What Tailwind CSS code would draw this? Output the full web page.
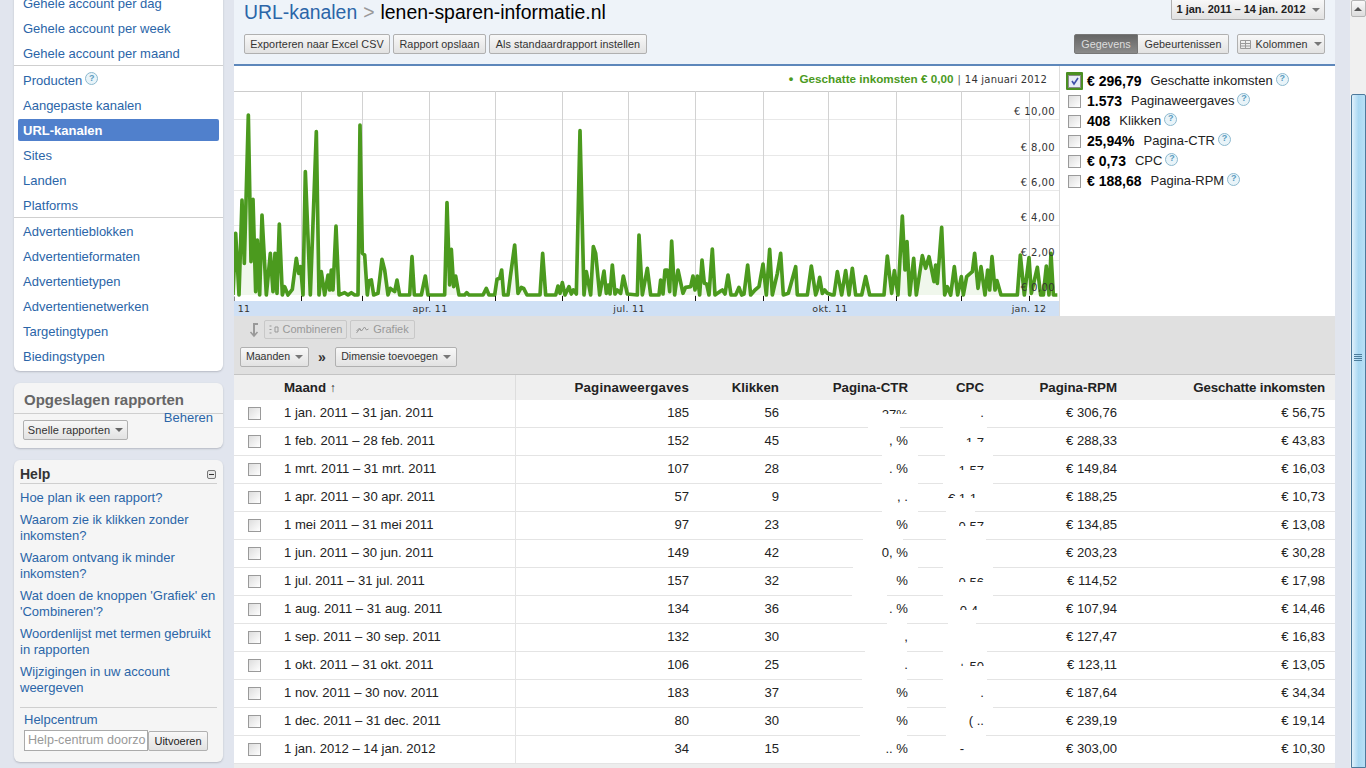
<!DOCTYPE html>
<html lang="nl">

<head>
  <meta charset="UTF-8" />
  <script src="https://cdn.jsdelivr.net/npm/@tailwindcss/browser@4"></script>
  <title>URL-kanalen</title>
</head>

<body class="bg-[#e1e5ee] font-['Liberation_Sans',Arial,sans-serif] text-black h-screen overflow-hidden flex">
  <!-- Sidebar -->
  <aside class="w-[234px] shrink-0 pl-[14px] pr-[11px] flex flex-col text-[13px] text-[#2b65a8]">
    <nav class="bg-white rounded-b-md shadow-[0_1px_2px_#b5b9c2] -mt-[10px] h-[381px] shrink-0">
      <ul class="border-b border-[#cfcfcf] h-[76px] pt-px">
        <li class="h-[25px] flex items-center px-[9px]">Gehele account per dag</li>
        <li class="h-[25px] flex items-center px-[9px]">Gehele account per week</li>
        <li class="h-[25px] flex items-center px-[9px]">Gehele account per maand</li>
      </ul>
      <ul class="border-b border-[#cfcfcf] pt-[2px] h-[152px]">
        <li class="h-[25px] flex items-center px-[9px]">Producten
          <span class="ml-[3px] -mt-1 w-[13px] h-[13px] rounded-full border border-[#8db9cf] bg-[#e9f4f9] text-[#5c9cc0] text-[9px] font-bold flex items-center justify-center">?</span>
        </li>
        <li class="h-[25px] flex items-center px-[9px]">Aangepaste kanalen</li>
        <li class="h-[25px] flex items-center px-[4px] pb-[2px]">
          <span class="w-[201px] h-[22px] bg-[#5080cc] rounded-[2px] text-white font-bold px-[5px] pt-[2px] flex items-center">URL-kanalen</span>
        </li>
        <li class="h-[25px] flex items-center px-[9px]">Sites</li>
        <li class="h-[25px] flex items-center px-[9px]">Landen</li>
        <li class="h-[25px] flex items-center px-[9px]">Platforms</li>
      </ul>
      <ul class="pt-px">
        <li class="h-[25px] flex items-center px-[9px]">Advertentieblokken</li>
        <li class="h-[25px] flex items-center px-[9px]">Advertentieformaten</li>
        <li class="h-[25px] flex items-center px-[9px]">Advertentietypen</li>
        <li class="h-[25px] flex items-center px-[9px]">Advertentienetwerken</li>
        <li class="h-[25px] flex items-center px-[9px]">Targetingtypen</li>
        <li class="h-[25px] flex items-center px-[9px]">Biedingstypen</li>
      </ul>
    </nav>

    <section class="mt-3 h-[65px] shrink-0 bg-[#f5f5f5] rounded-md shadow-[0_1px_2px_#b5b9c2]">
      <h2 class="h-[31px] border-b border-[#cfcfcf] px-[10px] pt-[4px] flex items-center text-[15px] font-bold text-[#666]">Opgeslagen rapporten</h2>
      <div class="flex justify-between pl-[9px] pr-[10px]">
        <button class="mt-[6px] h-[20px] w-[105px] rounded-[2px] border border-[#b0b0b0] bg-linear-to-b from-[#f8f8f8] to-[#e2e2e2] text-[11px] tracking-[0.1px] text-[#333] flex items-center justify-center gap-[5px]">Snelle rapporten <i class="border-x-[4px] border-t-[4px] border-x-transparent border-t-[#666]"></i></button>
        <a class="text-[#2b65a8] text-[13px] leading-none mt-[-3px]">Beheren</a>
      </div>
    </section>

    <section class="mt-3 h-[302px] shrink-0 bg-[#f5f5f5] rounded-md shadow-[0_1px_2px_#b5b9c2] px-[6px]">
      <div class="h-[21px] mt-[3px] border-b border-[#cfcfcf] flex items-center justify-between pt-[3px] text-[14px] font-bold text-[#333]">
        Help
        <span class="w-[9px] h-[9px] mr-[1px] rounded-[2px] border border-[#777] bg-[#e8e8e8] flex items-center justify-center"><i class="block w-[5px] h-px bg-[#333]"></i></span>
      </div>
      <ul class="text-[13px] leading-4 mt-[6px] flex flex-col gap-[6px] h-[217px]">
        <li>Hoe plan ik een rapport?</li>
        <li>Waarom zie ik klikken zonder inkomsten?</li>
        <li>Waarom ontvang ik minder inkomsten?</li>
        <li>Wat doen de knoppen 'Grafiek' en 'Combineren'?</li>
        <li>Woordenlijst met termen gebruikt in rapporten</li>
        <li>Wijzigingen in uw account weergeven</li>
      </ul>
      <div class="border-t border-[#cfcfcf] pl-1 pt-[4px]">
        <div class="text-[13px] leading-[15px]">Helpcentrum</div>
        <div class="flex items-end mt-[3px]">
          <div class="w-[124px] h-[21px] border border-[#aaa] bg-white text-[#999] text-[12.6px] leading-[19px] px-[3px] overflow-hidden whitespace-nowrap">Help-centrum doorzo</div>
          <button class="w-[60px] h-[20px] rounded-[2px] border border-[#b0b0b0] bg-linear-to-b from-[#f8f8f8] to-[#e2e2e2] text-[11px] text-[#222]">Uitvoeren</button>
        </div>
      </div>
    </section>
  </aside>

  <!-- Main column -->
  <main class="w-[1101px] shrink-0 flex flex-col">
    <header class="h-[66px] shrink-0 bg-[#eef3f9] border-b-2 border-[#5d87bb] px-[10px] flex flex-col">
      <div class="flex items-start justify-between h-[34px]">
        <h1 class="text-[19.4px] leading-[24px] flex"><span class="text-[#2b65a8]">URL-kanalen</span><span class="text-[#999] mx-[6px]">&gt;</span><span>lenen-sparen-informatie.nl</span></h1>
        <button class="w-[154px] h-[20px] rounded-b-[2px] border border-t-0 border-[#b0b0b0] bg-linear-to-b from-[#f8f8f8] to-[#e2e2e2] text-[11px] font-bold text-[#222] flex items-center justify-center gap-[6px]">1 jan. 2011 – 14 jan. 2012 <i class="border-x-[4px] border-t-[4px] border-x-transparent border-t-[#777]"></i></button>
      </div>
      <div class="flex items-center text-[10.8px] tracking-[0.05px] text-[#333]">
        <button class="h-[20px] w-[146px] rounded-[2px] border border-[#b0b0b0] bg-linear-to-b from-[#f8f8f8] to-[#e2e2e2]">Exporteren naar Excel CSV</button>
        <button class="ml-[3px] h-[20px] w-[93px] rounded-[2px] border border-[#b0b0b0] bg-linear-to-b from-[#f8f8f8] to-[#e2e2e2]">Rapport opslaan</button>
        <button class="ml-[3px] h-[20px] w-[158px] rounded-[2px] border border-[#b0b0b0] bg-linear-to-b from-[#f8f8f8] to-[#e2e2e2]">Als standaardrapport instellen</button>
        <button class="ml-auto h-[20px] w-[64px] rounded-l-[2px] border border-[#777] bg-linear-to-b from-[#666] to-[#8a8a8a] text-[#ddd]">Gegevens</button>
        <button class="h-[20px] w-[91px] rounded-r-[2px] border border-l-0 border-[#b0b0b0] bg-linear-to-b from-[#f8f8f8] to-[#e2e2e2]">Gebeurtenissen</button>
        <button class="ml-2 h-[20px] w-[88px] rounded-[2px] border border-[#b0b0b0] bg-linear-to-b from-[#f8f8f8] to-[#e2e2e2] flex items-center justify-center gap-[4px]">
          <svg width="11" height="9" viewBox="0 0 11 9" fill="none" stroke="#999"><path d="M.5.5h10v8H.5zM.5 3.500h10M.5 6h10M5.500.5v8" /></svg>
          Kolommen <i class="ml-[2px] border-x-[4px] border-t-[4px] border-x-transparent border-t-[#777]"></i>
        </button>
      </div>
    </header>

    <!-- Chart and metrics -->
    <section class="h-[250px] shrink-0 bg-white flex">
      <div class="w-[826px] shrink-0 border-r border-[#ddd]">
        <div class="h-[25px] flex items-center justify-end pr-[12px] pt-[1px] text-[10px] font-['DejaVu_Sans',sans-serif] text-[#333]">
          <span class="font-['Liberation_Sans',sans-serif] text-[11.7px] font-bold text-[#4b9a1e]"><span class="text-[13px] mr-[3px]">•</span> Geschatte inkomsten € 0,00</span>
          <span class="mx-[4px] text-[#555]">|</span>
          <span class="tracking-[0.2px]">14 januari 2012</span>
        </div>
        <svg class="block font-['DejaVu_Sans',sans-serif]" width="825" height="225" viewBox="235 91 825 225">
          <rect x="235" y="91" width="825" height="210" fill="#fff" />
          <path d="M235 91.500H1060" stroke="#ccc" />
          <path d="M235 119.500H1060M235 155.500H1060M235 190.500H1060M235 225.500H1060M235 260.500H1060" stroke="#e8e8e8" />
          <path d="M302.500 91V296M363.500 91V296M430.500 91V296M496.500 91V296M563.500 91V296M629.500 91V296M696.500 91V296M764.500 91V296M829.500 91V296M897.500 91V296M962.500 91V296M1030.500 91V296" stroke="#d2d2d2" />
          <g transform="translate(234 90) scale(.33333)" fill="#f0f7ec" stroke="#4b9a1e" stroke-width="11" stroke-linejoin="round">
            <polyline points="0,615 8,430 18,615 27,330 34,520 46,75 54,515 60,328 68,605 73,450 80,615 87,375 100,615 112,490 120,605 126,490 132,610 139,402 148,615 155,590 165,615 178,598 190,505 197,550 203,530 210,615 217,245 232,615 240,400 250,125 258,615 265,545 275,615 285,555 290,600 295,540 300,600 309,408 318,615 335,608 345,615 355,608 365,615 375,615 381,105 388,490 395,495 403,615 408,572 415,570 422,615 435,610 447,508 455,540 465,615 472,595 485,605 492,570 500,615 530,615 537,500 544,615 565,615 577,558 585,615 635,615 642,338 650,585 655,478 662,590 668,558 678,615 695,615 701,608 708,615 750,615 760,595 768,615 785,615 792,568 800,565 806,540 812,615 825,615 832,560 845,465 855,610 865,592 872,595 882,615 888,615" />
          </g>
          <g transform="translate(530 90) scale(.33333)" fill="#f0f7ec" stroke="#4b9a1e" stroke-width="11" stroke-linejoin="round">
            <polyline points="0,615 33,615 41,490 50,615 80,615 87,588 93,610 100,578 108,615 120,590 127,612 133,600 142,612 153,122 165,615 172,545 185,615 193,470 200,490 212,615 225,543 232,610 238,585 243,612 250,525 258,612 265,600 275,610 283,558 295,612 325,615 330,435 340,615 355,535 365,615 390,615 395,570 402,612 408,540 415,540 422,605 428,453 437,615 447,540 462,610 470,592 485,590 492,558 498,600 505,558 512,615 519,510 526,580 533,582 540,615 550,477 558,615 572,605 580,600 588,612 597,555 606,615 620,615 630,592 638,615 645,612 656,525 665,615 678,600 690,590 702,522 712,615 722,478 730,615 745,550 755,490 763,615 778,610 785,585 800,530 805,615 810,615" />
          </g>
          <g transform="translate(800 90) scale(.33333)" fill="#f0f7ec" stroke="#4b9a1e" stroke-width="11" stroke-linejoin="round">
            <polyline points="0,615 25,615 37,528 50,615 55,600 62,562 70,610 77,600 85,610 100,615 105,615 115,545 128,615 140,542 150,615 160,535 170,615 188,615 200,560 212,615 255,615 265,498 278,610 286,542 297,615 310,378 318,540 324,455 332,615 344,505 352,615 370,497 380,535 390,500 405,575 410,525 415,580 428,412 437,615 445,590 455,615 466,530 476,615 487,560 493,615 503,560 520,545 527,490 537,595 546,530 558,615 566,540 572,600 579,500 588,600 594,572 606,615 655,615 664,495 676,615 690,503 697,610 715,532 725,615 733,615 742,528 750,615 756,490 763,615 775,615" />
          </g>
          <rect x="235" y="301" width="825" height="15" fill="#cfe0f5" />
          <path d="M235 296.500V301M302.500 296V301M363.500 296V301M430.500 296V301M496.500 296V301M563.500 296V301M629.500 296V301M696.500 296V301M764.500 296V301M829.500 296V301M897.500 296V301M962.500 296V301M1030.500 296V301" stroke="#111" />
          <g font-size="10" fill="#333" text-anchor="end" letter-spacing=".4">
            <text x="1056" y="115">€ 10,00</text>
            <text x="1056" y="151">€ 8,00</text>
            <text x="1056" y="186">€ 6,00</text>
            <text x="1056" y="221">€ 4,00</text>
            <text x="1056" y="256">€ 2,00</text>
            <text x="1056" y="291">€ 0,00</text>
          </g>
          <g font-size="9.500" fill="#333" text-anchor="middle" letter-spacing=".3">
            <text x="245" y="312">11</text>
            <text x="431" y="312">apr. 11</text>
            <text x="630" y="312">jul. 11</text>
            <text x="831" y="312">okt. 11</text>
            <text x="1030" y="312">jan. 12</text>
          </g>
        </svg>
      </div>
      <ul class="flex-1 pl-[7px] pt-[5px] text-[13px] text-[#222]">
        <li class="h-[20px] flex items-center">
          <span class="w-[17px] h-[18px] -ml-px bg-[#4b8f22] rounded-[1px] flex items-center justify-center"><span class="w-[13px] h-[13px] border border-[#8a8a8a] bg-[#e8ecf6] flex items-center justify-center"><svg width="10" height="10" viewBox="0 0 10 10" fill="none" stroke="#3f4ea8" stroke-width="1.600"><path d="M2 5l2 3 4-6" /></svg></span></span>
          <b class="ml-[4px] text-[14px] text-black">€ 296,79</b><span class="ml-[9px]">Geschatte inkomsten</span>
          <span class="ml-[3px] -mt-1 w-[13px] h-[13px] rounded-full border border-[#8db9cf] bg-[#e9f4f9] text-[#5c9cc0] text-[9px] font-bold flex items-center justify-center">?</span>
        </li>
        <li class="h-[20px] flex items-center">
          <span class="w-[13px] h-[13px] ml-px border border-[#9a9a9a] bg-linear-to-br from-[#ddd] to-white"></span>
          <b class="ml-[6px] text-[14px] text-black">1.573</b><span class="ml-[9px]">Paginaweergaves</span>
          <span class="ml-[3px] -mt-1 w-[13px] h-[13px] rounded-full border border-[#8db9cf] bg-[#e9f4f9] text-[#5c9cc0] text-[9px] font-bold flex items-center justify-center">?</span>
        </li>
        <li class="h-[20px] flex items-center">
          <span class="w-[13px] h-[13px] ml-px border border-[#9a9a9a] bg-linear-to-br from-[#ddd] to-white"></span>
          <b class="ml-[6px] text-[14px] text-black">408</b><span class="ml-[9px]">Klikken</span>
          <span class="ml-[3px] -mt-1 w-[13px] h-[13px] rounded-full border border-[#8db9cf] bg-[#e9f4f9] text-[#5c9cc0] text-[9px] font-bold flex items-center justify-center">?</span>
        </li>
        <li class="h-[20px] flex items-center">
          <span class="w-[13px] h-[13px] ml-px border border-[#9a9a9a] bg-linear-to-br from-[#ddd] to-white"></span>
          <b class="ml-[6px] text-[14px] text-black">25,94%</b><span class="ml-[9px]">Pagina-CTR</span>
          <span class="ml-[3px] -mt-1 w-[13px] h-[13px] rounded-full border border-[#8db9cf] bg-[#e9f4f9] text-[#5c9cc0] text-[9px] font-bold flex items-center justify-center">?</span>
        </li>
        <li class="h-[20px] flex items-center">
          <span class="w-[13px] h-[13px] ml-px border border-[#9a9a9a] bg-linear-to-br from-[#ddd] to-white"></span>
          <b class="ml-[6px] text-[14px] text-black">€ 0,73</b><span class="ml-[9px]">CPC</span>
          <span class="ml-[3px] -mt-1 w-[13px] h-[13px] rounded-full border border-[#8db9cf] bg-[#e9f4f9] text-[#5c9cc0] text-[9px] font-bold flex items-center justify-center">?</span>
        </li>
        <li class="h-[20px] flex items-center">
          <span class="w-[13px] h-[13px] ml-px border border-[#9a9a9a] bg-linear-to-br from-[#ddd] to-white"></span>
          <b class="ml-[6px] text-[14px] text-black">€ 188,68</b><span class="ml-[9px]">Pagina-RPM</span>
          <span class="ml-[3px] -mt-1 w-[13px] h-[13px] rounded-full border border-[#8db9cf] bg-[#e9f4f9] text-[#5c9cc0] text-[9px] font-bold flex items-center justify-center">?</span>
        </li>
      </ul>
    </section>

    <!-- Toolbar -->
    <section class="h-[59px] shrink-0 bg-[#e0e0e0] border-b border-[#c4c4c4] text-[10.6px]">
      <div class="flex items-center h-[27px] pl-[14px]">
        <svg width="12" height="16" viewBox="0 0 12 16" fill="none" stroke="#999" stroke-width="2"><path d="M10 2H6v11" /><path d="M2.500 10L6 14l3.500-4" stroke-width="1.500" /></svg>
        <button class="ml-[4px] h-[19px] w-[83px] rounded-[2px] border border-[#c8c8c8] text-[11px] text-[#999] flex items-center justify-center gap-[4px]">
          <svg width="10" height="9" viewBox="0 0 10 9" fill="none" stroke="#999"><path d="M.5 1h2M.5 4.500h2M.5 8h2M6 2h3v5H6z" /></svg>
          Combineren
        </button>
        <button class="ml-[3px] h-[19px] w-[65px] rounded-[2px] border border-[#c8c8c8] text-[11px] text-[#999] flex items-center justify-center gap-[4px]">
          <svg width="13" height="8" viewBox="0 0 13 8" fill="none" stroke="#999"><path d="M.5 7l3-4 2 2 3-4 2 3 2-1M.5 5l3-3 2 3" /></svg>
          Grafiek
        </button>
      </div>
      <div class="flex items-center h-[20px] pl-[6px] mt-[4px] text-[#333]">
        <button class="h-[20px] w-[69px] rounded-[2px] border border-[#b0b0b0] bg-linear-to-b from-[#f8f8f8] to-[#e2e2e2] flex items-center justify-center gap-[5px]">Maanden <i class="border-x-[4px] border-t-[4px] border-x-transparent border-t-[#777]"></i></button>
        <span class="w-[26px] text-center text-[14px] leading-none font-bold">»</span>
        <button class="h-[20px] w-[122px] rounded-[2px] border border-[#b0b0b0] bg-linear-to-b from-[#f8f8f8] to-[#e2e2e2] flex items-center justify-center gap-[5px]">Dimensie toevoegen <i class="border-x-[4px] border-t-[4px] border-x-transparent border-t-[#777]"></i></button>
      </div>
    </section>

    <!-- Report table -->
    <table class="w-[1101px] table-fixed border-separate border-spacing-0 bg-white text-[13.1px] text-[#222] shrink-0">
      <colgroup>
        <col class="w-[50px]" /><col class="w-[232px]" /><col class="w-[183px]" /><col class="w-[90px]" /><col class="w-[129px]" /><col class="w-[76px]" /><col class="w-[133px]" /><col class="w-[208px]" />
      </colgroup>
      <thead class="bg-[#efefef] text-[13.3px] font-bold text-right">
        <tr class="h-[25px]">
          <th></th>
          <th class="text-left border-r border-[#ddd]">Maand <span class="text-[12px]">↑</span></th>
          <th class="pr-[10px] tracking-[0.2px]">Paginaweergaves</th>
          <th class="pr-[10px]">Klikken</th>
          <th class="pr-[10px]">Pagina-CTR</th>
          <th class="pr-[10px]">CPC</th>
          <th class="pr-[10px]">Pagina-RPM</th>
          <th class="pr-[10px] tracking-[-0.15px]">Geschatte inkomsten</th>
        </tr>
      </thead>
      <tbody class="text-right [&_td]:border-b [&_td]:border-[#e4e4e4] [&_td]:pr-[10px] [&_td]:pb-px">
        <tr class="h-[28px]">
          <td><span class="block ml-[14px] w-[13px] h-[13px] border border-[#9a9a9a] bg-linear-to-br from-[#ddd] to-white"></span></td>
          <td class="text-left border-r border-[#e4e4e4]">1 jan. 2011 – 31 jan. 2011</td>
          <td>185</td><td>56</td>
          <td class="relative"><span class="inline-block h-[6px] overflow-hidden align-[3px] leading-[14px]">,27%</span><i class="absolute -bottom-px left-[79px] w-[32px] h-[3px] bg-white"></i></td>
          <td class="relative">.<i class="absolute -bottom-px left-[25px] w-[44px] h-[3px] bg-white"></i></td>
          <td>€ 306,76</td><td>€ 56,75</td>
        </tr>
        <tr class="h-[28px]">
          <td><span class="block ml-[14px] w-[13px] h-[13px] border border-[#9a9a9a] bg-linear-to-br from-[#ddd] to-white"></span></td>
          <td class="text-left border-r border-[#e4e4e4]">1 feb. 2011 – 28 feb. 2011</td>
          <td>152</td><td>45</td>
          <td class="relative">, %<i class="absolute -bottom-px left-[93px] w-[44px] h-[3px] bg-white"></i></td>
          <td class="relative"><span class="inline-block h-[6px] overflow-hidden align-[3px] leading-[14px]">1 7</span><i class="absolute -bottom-px left-[27px] w-[48px] h-[3px] bg-white"></i></td>
          <td>€ 288,33</td><td>€ 43,83</td>
        </tr>
        <tr class="h-[28px]">
          <td><span class="block ml-[14px] w-[13px] h-[13px] border border-[#9a9a9a] bg-linear-to-br from-[#ddd] to-white"></span></td>
          <td class="text-left border-r border-[#e4e4e4]">1 mrt. 2011 – 31 mrt. 2011</td>
          <td>107</td><td>28</td>
          <td class="relative">. %<i class="absolute -bottom-px left-[93px] w-[45px] h-[3px] bg-white"></i></td>
          <td class="relative"><span class="inline-block h-[6px] overflow-hidden align-[3px] leading-[14px]">1 57</span><i class="absolute -bottom-px left-[25px] w-[50px] h-[3px] bg-white"></i></td>
          <td>€ 149,84</td><td>€ 16,03</td>
        </tr>
        <tr class="h-[28px]">
          <td><span class="block ml-[14px] w-[13px] h-[13px] border border-[#9a9a9a] bg-linear-to-br from-[#ddd] to-white"></span></td>
          <td class="text-left border-r border-[#e4e4e4]">1 apr. 2011 – 30 apr. 2011</td>
          <td>57</td><td>9</td>
          <td class="relative">, .<i class="absolute -bottom-px left-[93px] w-[44px] h-[3px] bg-white"></i></td>
          <td class="relative"><span class="inline-block h-[6px] overflow-hidden align-[3px] leading-[14px] mr-[7px]">€ 1 1</span><i class="absolute -bottom-px left-[28px] w-[29px] h-[3px] bg-white"></i></td>
          <td>€ 188,25</td><td>€ 10,73</td>
        </tr>
        <tr class="h-[28px]">
          <td><span class="block ml-[14px] w-[13px] h-[13px] border border-[#9a9a9a] bg-linear-to-br from-[#ddd] to-white"></span></td>
          <td class="text-left border-r border-[#e4e4e4]">1 mei 2011 – 31 mei 2011</td>
          <td>97</td><td>23</td>
          <td class="relative">%<i class="absolute -bottom-px left-[74px] w-[40px] h-[3px] bg-white"></i></td>
          <td class="relative"><span class="inline-block h-[6px] overflow-hidden align-[3px] leading-[14px]">0,57</span><i class="absolute -bottom-px left-[28px] w-[40px] h-[3px] bg-white"></i></td>
          <td>€ 134,85</td><td>€ 13,08</td>
        </tr>
        <tr class="h-[28px]">
          <td><span class="block ml-[14px] w-[13px] h-[13px] border border-[#9a9a9a] bg-linear-to-br from-[#ddd] to-white"></span></td>
          <td class="text-left border-r border-[#e4e4e4]">1 jun. 2011 – 30 jun. 2011</td>
          <td>149</td><td>42</td>
          <td class="relative">0, %<i class="absolute -bottom-px left-[64px] w-[68px] h-[3px] bg-white"></i></td>
          <td class="relative"><i class="absolute -bottom-px left-[25px] w-[50px] h-[3px] bg-white"></i></td>
          <td>€ 203,23</td><td>€ 30,28</td>
        </tr>
        <tr class="h-[28px]">
          <td><span class="block ml-[14px] w-[13px] h-[13px] border border-[#9a9a9a] bg-linear-to-br from-[#ddd] to-white"></span></td>
          <td class="text-left border-r border-[#e4e4e4]">1 jul. 2011 – 31 jul. 2011</td>
          <td>157</td><td>32</td>
          <td class="relative">%<i class="absolute -bottom-px left-[63px] w-[35px] h-[3px] bg-white"></i></td>
          <td class="relative"><span class="inline-block h-[6px] overflow-hidden align-[3px] leading-[14px]">0,56</span><i class="absolute -bottom-px left-[25px] w-[50px] h-[3px] bg-white"></i></td>
          <td>€ 114,52</td><td>€ 17,98</td>
        </tr>
        <tr class="h-[28px]">
          <td><span class="block ml-[14px] w-[13px] h-[13px] border border-[#9a9a9a] bg-linear-to-br from-[#ddd] to-white"></span></td>
          <td class="text-left border-r border-[#e4e4e4]">1 aug. 2011 – 31 aug. 2011</td>
          <td>134</td><td>36</td>
          <td class="relative">. %<i class="absolute -bottom-px left-[98px] w-[20px] h-[3px] bg-white"></i></td>
          <td class="relative"><span class="inline-block h-[6px] overflow-hidden align-[3px] leading-[14px] mr-[6px]">0,4</span><i class="absolute -bottom-px left-[30px] w-[28px] h-[3px] bg-white"></i></td>
          <td>€ 107,94</td><td>€ 14,46</td>
        </tr>
        <tr class="h-[28px]">
          <td><span class="block ml-[14px] w-[13px] h-[13px] border border-[#9a9a9a] bg-linear-to-br from-[#ddd] to-white"></span></td>
          <td class="text-left border-r border-[#e4e4e4]">1 sep. 2011 – 30 sep. 2011</td>
          <td>132</td><td>30</td>
          <td class="relative">,<i class="absolute -bottom-px left-[76px] w-[42px] h-[3px] bg-white"></i></td>
          <td class="relative"><i class="absolute -bottom-px left-[25px] w-[44px] h-[3px] bg-white"></i></td>
          <td>€ 127,47</td><td>€ 16,83</td>
        </tr>
        <tr class="h-[28px]">
          <td><span class="block ml-[14px] w-[13px] h-[13px] border border-[#9a9a9a] bg-linear-to-br from-[#ddd] to-white"></span></td>
          <td class="text-left border-r border-[#e4e4e4]">1 okt. 2011 – 31 okt. 2011</td>
          <td>106</td><td>25</td>
          <td class="relative">.<i class="absolute -bottom-px left-[73px] w-[45px] h-[3px] bg-white"></i></td>
          <td class="relative"><span class="inline-block h-[6px] overflow-hidden align-[3px] leading-[14px]">+ 50</span><i class="absolute -bottom-px left-[25px] w-[44px] h-[3px] bg-white"></i></td>
          <td>€ 123,11</td><td>€ 13,05</td>
        </tr>
        <tr class="h-[28px]">
          <td><span class="block ml-[14px] w-[13px] h-[13px] border border-[#9a9a9a] bg-linear-to-br from-[#ddd] to-white"></span></td>
          <td class="text-left border-r border-[#e4e4e4]">1 nov. 2011 – 30 nov. 2011</td>
          <td>183</td><td>37</td>
          <td class="relative">%<i class="absolute -bottom-px left-[74px] w-[44px] h-[3px] bg-white"></i></td>
          <td class="relative">.<i class="absolute -bottom-px left-[28px] w-[47px] h-[3px] bg-white"></i></td>
          <td>€ 187,64</td><td>€ 34,34</td>
        </tr>
        <tr class="h-[28px]">
          <td><span class="block ml-[14px] w-[13px] h-[13px] border border-[#9a9a9a] bg-linear-to-br from-[#ddd] to-white"></span></td>
          <td class="text-left border-r border-[#e4e4e4]">1 dec. 2011 – 31 dec. 2011</td>
          <td>80</td><td>30</td>
          <td class="relative">%<i class="absolute -bottom-px left-[71px] w-[47px] h-[3px] bg-white"></i></td>
          <td class="relative">( ..<i class="absolute -bottom-px left-[28px] w-[40px] h-[3px] bg-white"></i></td>
          <td>€ 239,19</td><td>€ 19,14</td>
        </tr>
        <tr class="h-[28px]">
          <td><span class="block ml-[14px] w-[13px] h-[13px] border border-[#9a9a9a] bg-linear-to-br from-[#ddd] to-white"></span></td>
          <td class="text-left border-r border-[#e4e4e4]">1 jan. 2012 – 14 jan. 2012</td>
          <td>34</td><td>15</td>
          <td class="relative">.. %</td>
          <td class="relative pr-[30px]!">-</td>
          <td>€ 303,00</td><td>€ 10,30</td>
        </tr>
      </tbody>
    </table>
    <div class="flex-1 bg-[#ededed]"></div>
  </main>

  <!-- Browser scrollbar -->
  <div class="ml-[15px] w-[16px] shrink-0 bg-[#f0f0f0] flex flex-col items-center">
    <div class="w-[15px] h-[17px] rounded-[2px] border border-[#b5b5b5] bg-linear-to-b from-[#fafafa] to-[#dcdcdc] flex items-center justify-center"><i class="border-x-[4px] border-b-[4px] border-x-transparent border-b-[#555]"></i></div>
    <div class="mt-[77px] w-[15px] flex-1 rounded-t-[2px] border border-[#4e7a9c] bg-linear-to-r from-[#e0f1fb] via-[#a9d8f2] to-[#b8e0f6] flex flex-col items-center pt-[259px] gap-px">
      <i class="block w-[8px] h-px bg-[#4d7d9c]"></i><i class="block w-[8px] h-px bg-[#4d7d9c]"></i><i class="block w-[8px] h-px bg-[#4d7d9c]"></i><i class="block w-[8px] h-px bg-[#4d7d9c]"></i>
    </div>
  </div>
</body>

</html>
